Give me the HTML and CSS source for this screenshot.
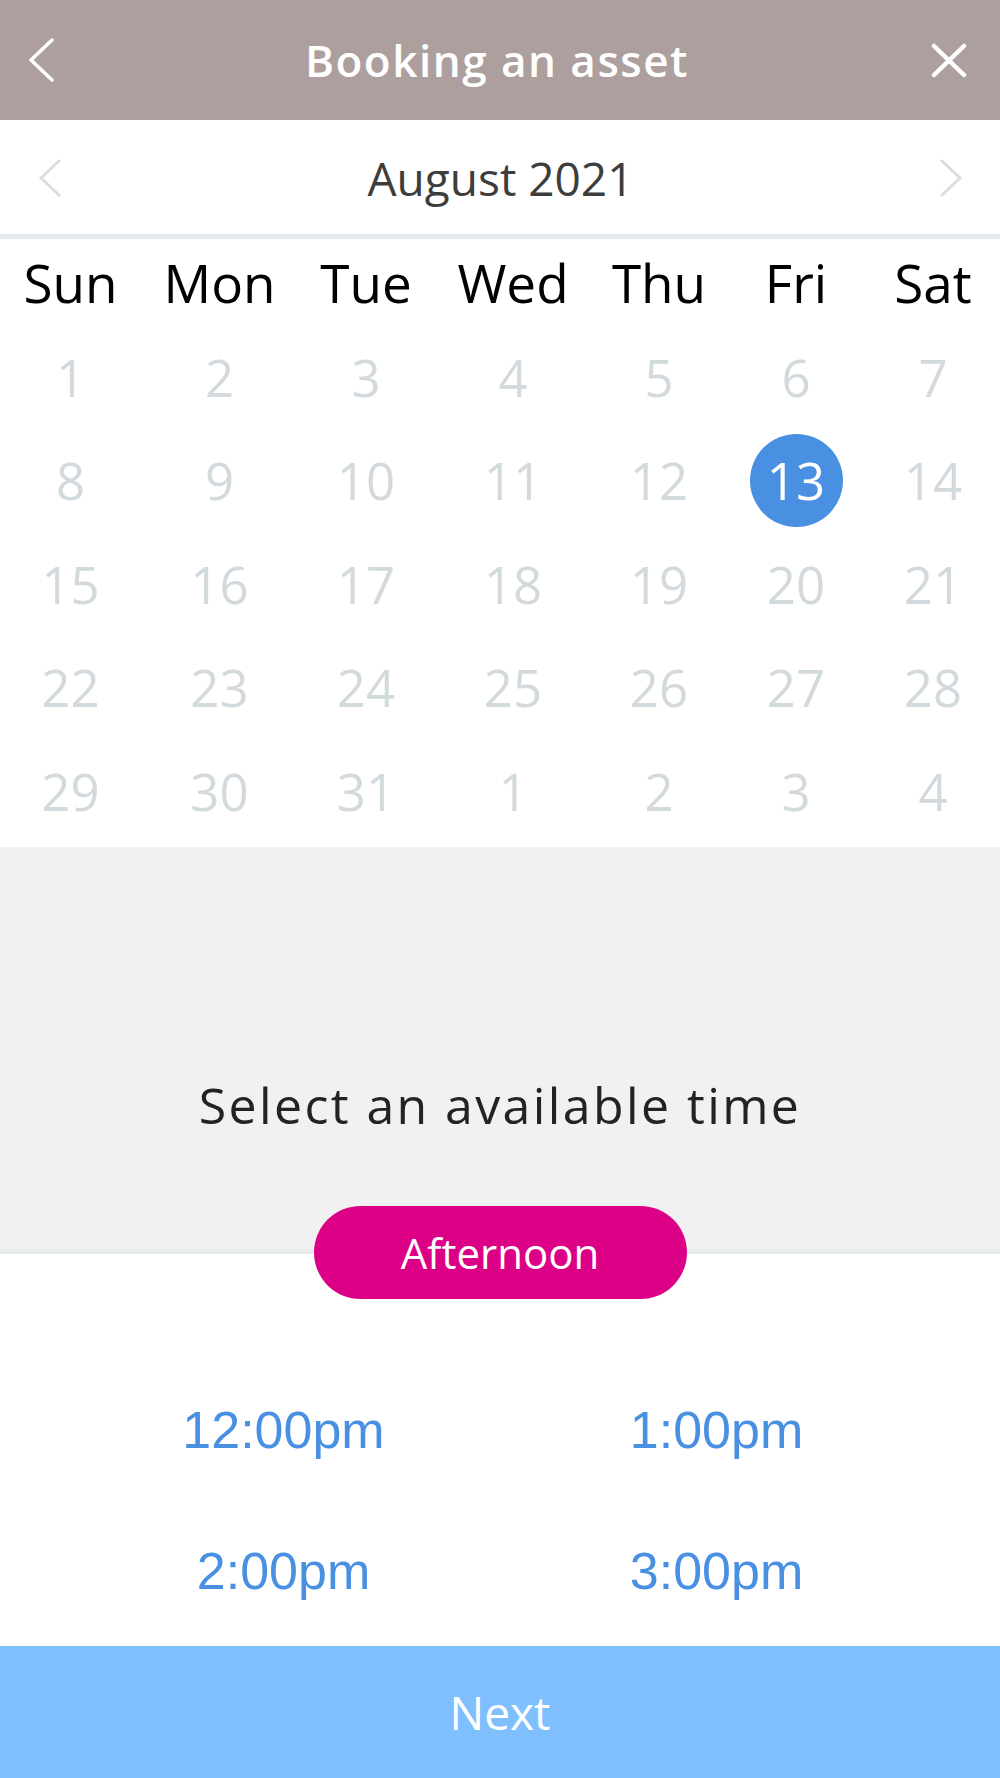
FILE: index.html
```html
<!DOCTYPE html>
<html lang="en">
<head>
  <meta charset="UTF-8">
  <meta name="viewport" content="width=device-width, initial-scale=1.0">
  <title>Booking an asset</title>
  <link rel="stylesheet" href="styles.css">
</head>
<body>
  <div class="screen">
    <header class="topbar">
      <button class="icon-btn back" aria-label="Back">
        <svg width="28" height="44" viewBox="0 0 28 44"><polyline points="25,2 4,22 25,42" fill="none" stroke="#fff" stroke-width="3.5" stroke-linecap="round" stroke-linejoin="round"/></svg>
      </button>
      <h1>Booking an asset</h1>
      <button class="icon-btn close" aria-label="Close">
        <svg width="36" height="35" viewBox="0 0 36 35"><path d="M3 3 L33 32 M33 3 L3 32" fill="none" stroke="#fff" stroke-width="4.5" stroke-linecap="round"/></svg>
      </button>
    </header>

    <main class="content">
      <div class="month-nav">
        <button class="icon-btn" aria-label="Previous month">
          <svg width="24" height="40" viewBox="0 0 24 40"><polyline points="22,2 3,20 22,38" fill="none" stroke="#d7dfe2" stroke-width="3"/></svg>
        </button>
        <span class="month-label">August 2021</span>
        <button class="icon-btn" aria-label="Next month">
          <svg width="24" height="40" viewBox="0 0 24 40"><polyline points="2,2 21,20 2,38" fill="none" stroke="#d7dfe2" stroke-width="3"/></svg>
        </button>
      </div>

      <div class="calendar" id="calendar">
        <div class="weekday">Sun</div>
        <div class="weekday">Mon</div>
        <div class="weekday">Tue</div>
        <div class="weekday">Wed</div>
        <div class="weekday">Thu</div>
        <div class="weekday">Fri</div>
        <div class="weekday">Sat</div>
      </div>

      <section class="time-intro">
        <p>Select an available time</p>
      </section>

      <div class="period">
        <span class="pill">Afternoon</span>
      </div>

      <div class="slots">
        <a href="#" class="slot">12:00pm</a>
        <a href="#" class="slot">1:00pm</a>
        <a href="#" class="slot">2:00pm</a>
        <a href="#" class="slot">3:00pm</a>
      </div>
    </main>

    <button class="next-btn">Next</button>
  </div>

  <script>
    // Fill the month grid: August 2021 starts on a Sunday
    const calendar = document.getElementById('calendar');
    const days = [];
    for (let d = 1; d <= 31; d++) days.push(d);
    for (let d = 1; d <= 4; d++) days.push(d);

    days.forEach((d, i) => {
      const cell = document.createElement('div');
      cell.className = 'day';
      const num = document.createElement('span');
      num.textContent = d;
      if (i === 12) num.className = 'selected';
      cell.appendChild(num);
      calendar.appendChild(cell);
    });
  </script>
</body>
</html>
```

FILE: styles.css
```css
body {
  margin: 0;
  font-family: 'Open Sans', 'Noto Sans', sans-serif;
  background: #fff;
}

.screen {
  width: 1000px;
  height: 1778px;
  display: flex;
  flex-direction: column;
  overflow: hidden;
}

.icon-btn {
  background: none;
  border: none;
  padding: 0;
  display: flex;
  cursor: pointer;
}

/* Top bar */
.topbar {
  height: 120px;
  flex-shrink: 0;
  background: #ae9f9f;
  display: grid;
  grid-template-columns: 1fr auto 1fr;
  align-items: center;
  padding: 0 33px 0 27px;
}
.topbar h1 {
  margin: 0;
  color: #fff;
  font-size: 44px;
  font-weight: 600;
  letter-spacing: 1.5px;
}
.topbar .close {
  justify-self: end;
}

.content {
  flex: 1;
  overflow: hidden;
}

/* Month selector */
.month-nav {
  height: 119px;
  display: flex;
  align-items: center;
  justify-content: space-between;
  padding: 2px 37px 0 38px;
  box-sizing: border-box;
  border-bottom: 5px solid #e5eaed;
}
.month-label {
  font-size: 46px;
  color: #3d3d3d;
}

/* Calendar grid */
.calendar {
  display: grid;
  grid-template-columns: 141fr 157fr 136fr 158fr 134fr 140fr 134fr;
  grid-template-rows: 86px;
  grid-auto-rows: 103.5px;
  padding-bottom: 4px;
}
.weekday {
  display: flex;
  align-items: center;
  justify-content: center;
  font-size: 53px;
  color: #000;
}
.day {
  display: flex;
  align-items: center;
  justify-content: center;
  font-size: 51px;
  color: #d3dadd;
}
.day span {
  display: flex;
  align-items: center;
  justify-content: center;
}
.day .selected {
  width: 93px;
  height: 93px;
  border-radius: 50%;
  background: #4a90e2;
  color: #fff;
}

/* Time section */
.time-intro {
  background: #f1f1f1;
  border-bottom: 5px solid #e7ebeb;
  padding: 224px 0 110px;
  text-align: center;
}
.time-intro p {
  margin: 0;
  line-height: 68px;
  font-size: 50px;
  letter-spacing: 2.4px;
  color: #232323;
}

.period {
  display: flex;
  justify-content: center;
  margin-top: -48px;
}
.pill {
  width: 373px;
  height: 93px;
  border-radius: 47px;
  background: #dc0087;
  color: #fff;
  font-size: 42px;
  display: flex;
  align-items: center;
  justify-content: center;
}

.slots {
  display: grid;
  grid-template-columns: 1fr 1fr;
  grid-auto-rows: 141px;
  padding: 0 67px;
  margin-top: 61px;
}
.slot {
  font-family: 'Liberation Sans', Arial, sans-serif;
  font-size: 52px;
  color: #4a90e2;
  text-decoration: none;
  display: flex;
  align-items: center;
  justify-content: center;
}

/* Bottom action */
.next-btn {
  height: 132px;
  flex-shrink: 0;
  border: none;
  background: #80bffe;
  color: #fff;
  font-family: 'Open Sans', 'Noto Sans', sans-serif;
  font-size: 46px;
  cursor: pointer;
}
```
